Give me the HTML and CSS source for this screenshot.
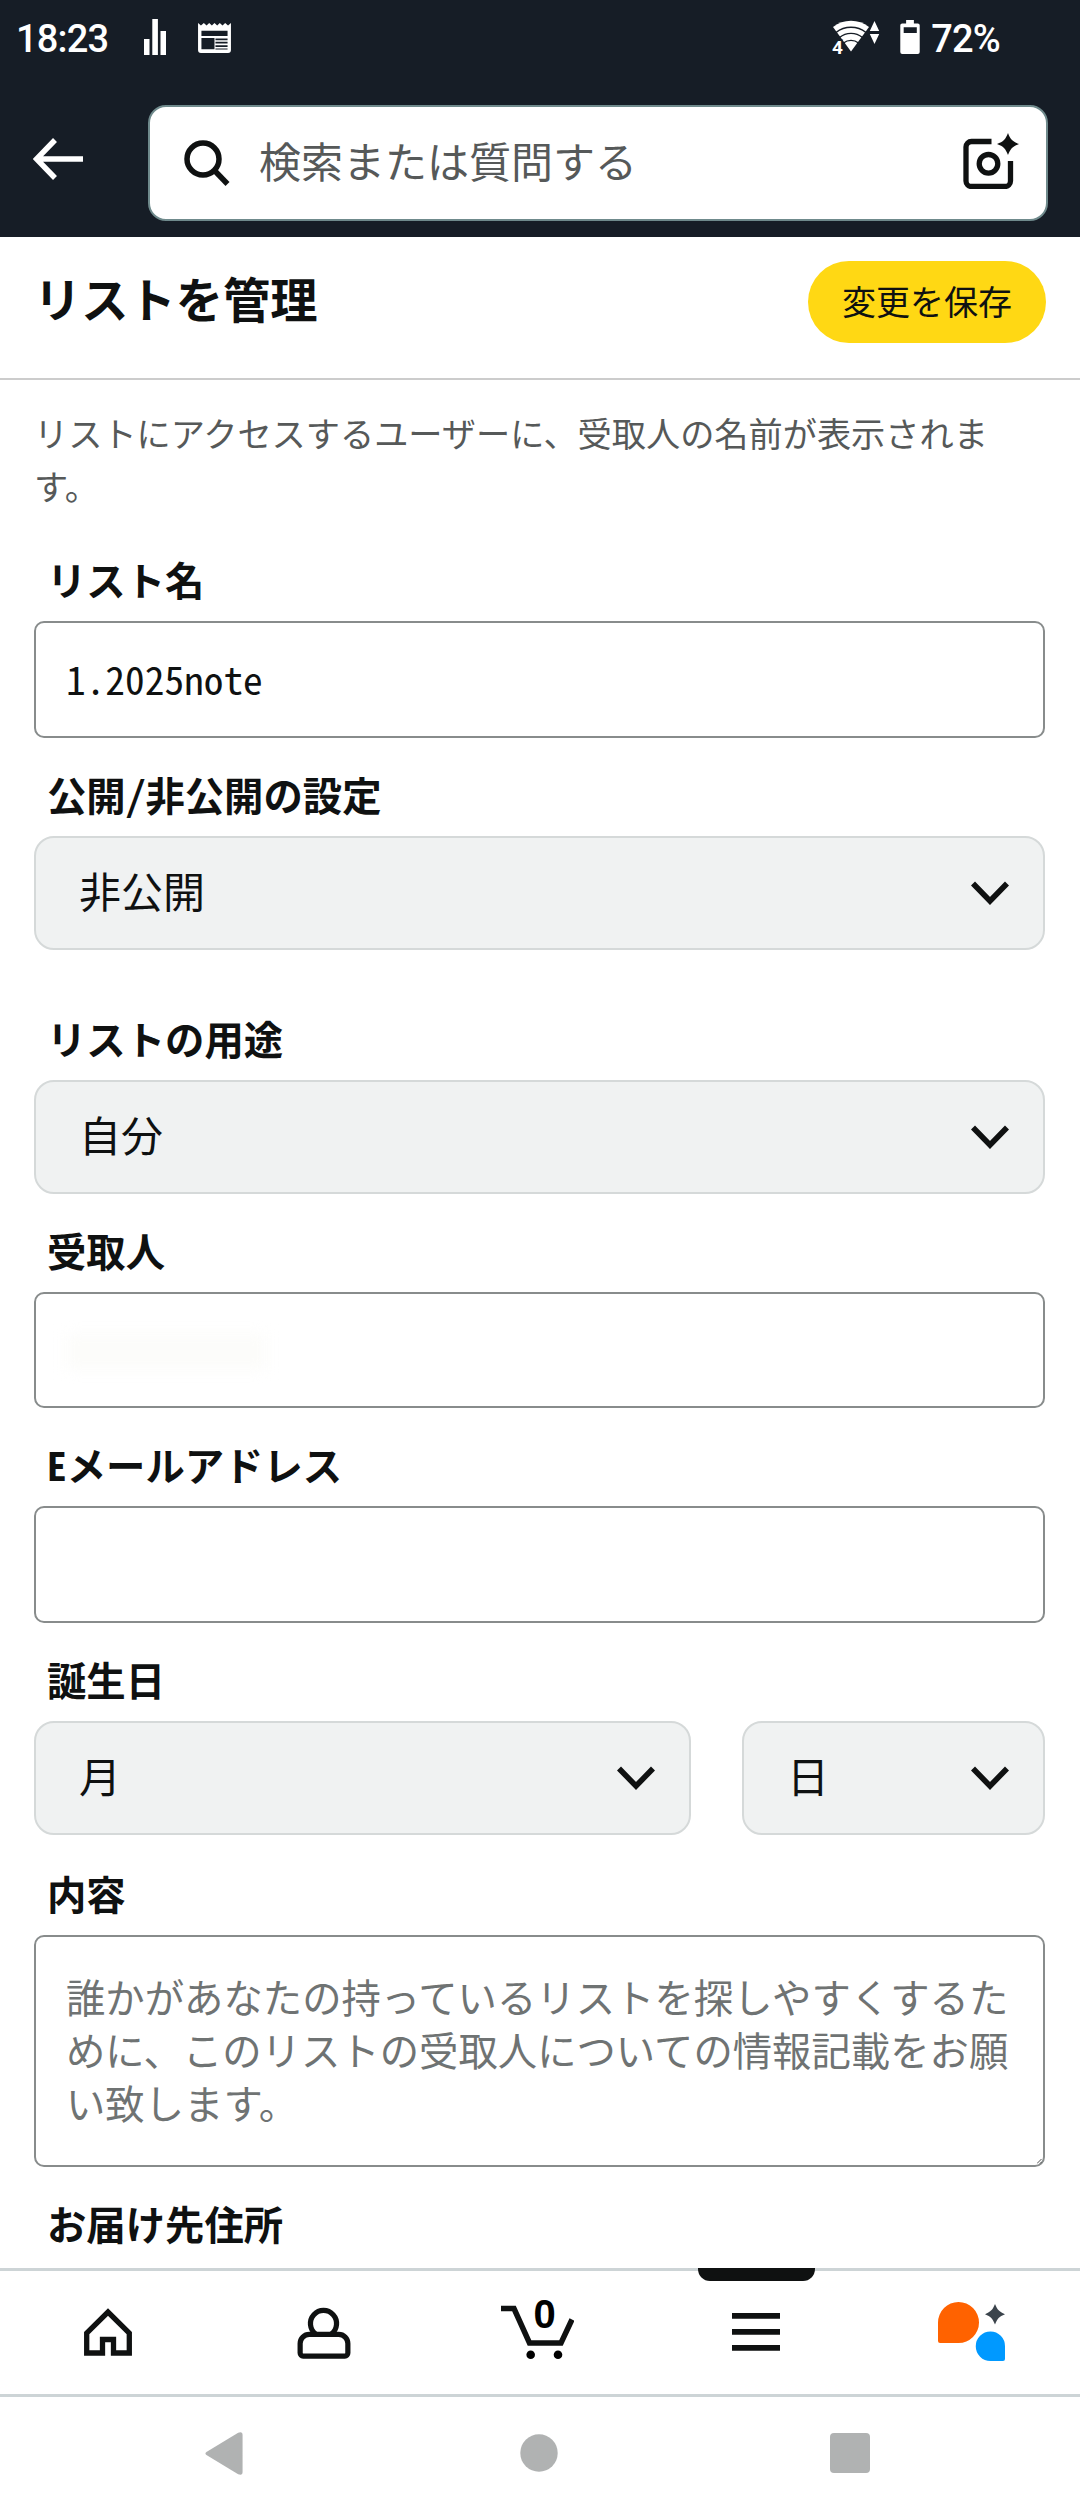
FILE: index.html
```html
<!DOCTYPE html>
<html lang="ja">
<head>
    <meta charset="UTF-8">
    <meta name="viewport" content="width=device-width, initial-scale=1.0">
    <title>リストを管理</title>
    <link rel="stylesheet" href="styles.css">
</head>
<body>
    <header class="header">
        <div class="status">
            <span class="status-time">18:23</span>
            <svg class="status-bars" width="22" height="36" viewBox="0 0 22 36" fill="#fff">
                <path d="M0 20h5.500v16H0zM8.300 0h5.600v36H8.300zM16.500 12H22v24h-5.500z"/>
            </svg>
            <svg class="status-news" width="33" height="30" viewBox="0 0 34 31">
                <path fill="#fff" fill-rule="evenodd" d="M0 0l3 2.500L6 0l2.800 2.500L11.500 0l2.800 2.500L17 0l2.800 2.500L22.500 0l2.800 2.500L28 0l3 2.500L34 0v28a3 3 0 0 1-3 3H3a3 3 0 0 1-3-3zM3.500 8v5.500h27V8zM3.500 15.500v11.500H17V15.500zM18 16v1.800h12.500V16zM18 19.500v1.800h12.500v-1.800zM18 23v1.800h12.500V23zM18 26.300v1.200h12.500v-1.200z"/>
            </svg>
            <svg class="status-wifi" width="50" height="44" viewBox="0 0 50 44">
                <path fill="#fff" d="M1 7a29 29 0 0 1 36 0L19 31.500z"/>
                <path fill="none" stroke="#161d26" stroke-width="1.400" d="M4 12.500a24 24 0 0 1 30 0M7.500 17.500a18 18 0 0 1 23 0M11.500 23a12 12 0 0 1 15 0"/>
                <path fill="#fff" d="M42.500 1l4.700 10h-9.400zM42.500 24l-4.700-10h9.400z"/>
                <text x="0" y="33.500" class="wifi-num">4</text>
            </svg>
            <svg class="status-battery" width="20" height="34" viewBox="0 0 20 35">
                <path fill="#fff" fill-rule="evenodd" d="M6 0h8v3.500h4a2 2 0 0 1 2 2V33a2 2 0 0 1-2 2H2a2 2 0 0 1-2-2V5.500a2 2 0 0 1 2-2h4zM3.500 7.500v6h13.500v-6z"/>
            </svg>
            <span class="status-percent">72%</span>
        </div>
        <div class="search-row">
            <svg class="back" width="50" height="42" viewBox="0 0 50 42" fill="none" stroke="#fff" stroke-width="5.500">
                <path d="M22 2L3.500 21L22 40M4 21h46"/>
            </svg>
            <div class="search">
                <svg width="46" height="46" viewBox="0 0 46 46" fill="none" stroke="#0f1111" stroke-width="5.500">
                    <circle cx="19" cy="19" r="16"/>
                    <path d="M30 30l13.500 14"/>
                </svg>
                <span class="search-text">検索または質問する</span>
                <svg class="camera" width="56" height="56" viewBox="0 0 56 56" fill="none" stroke="#0f1111" stroke-width="5.300">
                    <path d="M28.500 8.500H8.500a5.500 5.500 0 0 0-5.500 5.500v34a5.500 5.500 0 0 0 5.500 5.500h33.500a5.500 5.500 0 0 0 5.500-5.500V28"/>
                    <circle cx="25.500" cy="30.800" r="9.300"/>
                    <path fill="#0f1111" stroke="none" d="M45 0c2.500 6.500 4.500 8.500 11 11c-6.500 2.500-8.500 4.500-11 11c-2.500-6.500-4.500-8.500-11-11c6.500-2.500 8.500-4.500 11-11z"/>
                </svg>
            </div>
        </div>
    </header>

    <div class="title-bar">
        <h1>リストを管理</h1>
        <button class="save">変更を保存</button>
    </div>

    <main class="form">
        <p class="note">リストにアクセスするユーザーに、受取人の名前が表示されます。</p>

        <div class="label">リスト名</div>
        <div class="input">1.2025note</div>

        <div class="label">公開/非公開の設定</div>
        <div class="select select-gap">
            <span>非公開</span>
            <svg class="arrow" viewBox="0 0 38 24"><path d="M2 2.500l17 17.500l17-17.500"/></svg>
        </div>

        <div class="label">リストの用途</div>
        <div class="select">
            <span>自分</span>
            <svg class="arrow" viewBox="0 0 38 24"><path d="M2 2.500l17 17.500l17-17.500"/></svg>
        </div>

        <div class="label">受取人</div>
        <div class="input"><span class="smudge"></span></div>

        <div class="label">Eメールアドレス</div>
        <div class="input"></div>

        <div class="label">誕生日</div>
        <div class="birthday">
            <div class="select">
                <span>月</span>
                <svg class="arrow" viewBox="0 0 38 24"><path d="M2 2.500l17 17.500l17-17.500"/></svg>
            </div>
            <div class="select">
                <span>日</span>
                <svg class="arrow" viewBox="0 0 38 24"><path d="M2 2.500l17 17.500l17-17.500"/></svg>
            </div>
        </div>

        <div class="label">内容</div>
        <div class="textarea">誰かがあなたの持っているリストを探しやすくするために、このリストの受取人についての情報記載をお願い致します。
            <svg class="grip" width="5" height="5" viewBox="0 0 5 5" stroke="#555"><path d="M0 4.500L4.500 0M3 4.500L4.500 3"/></svg>
        </div>

        <div class="label">お届け先住所</div>
    </main>

    <nav class="tabs">
        <div class="tab">
            <svg width="48" height="48" viewBox="0 0 48 48" fill="none" stroke="#0f1111" stroke-width="5.300">
                <path d="M2.700 45V25L24 4l21.300 21v20H29.500V31.500h-11V45z"/>
            </svg>
        </div>
        <div class="tab">
            <svg width="54" height="54" viewBox="0 0 54 55" fill="none" stroke="#0f1111" stroke-width="5.300">
                <path d="M18.500 29.500a13.300 13.300 0 1 1 16 0"/>
                <path d="M12 30h30a9.300 9.300 0 0 1 9.300 9.300V49a3 3 0 0 1-3 3H5.700a3 3 0 0 1-3-3v-9.700A9.300 9.300 0 0 1 12 30z"/>
            </svg>
        </div>
        <div class="tab tab-cart">
            <svg width="73" height="78" viewBox="0 0 73 78">
                <path fill="none" stroke="#0f1111" stroke-width="5.500" d="M0 19.500h13L28.500 54h31.500L71 30.500"/>
                <circle cx="29.700" cy="65.700" r="4.300"/>
                <circle cx="57" cy="65.700" r="4.300"/>
                <text x="43.500" y="39" text-anchor="middle" class="cart-num">0</text>
            </svg>
        </div>
        <div class="tab tab-active">
            <svg width="48" height="38" viewBox="0 0 48 38" fill="#0f1111">
                <path d="M0 0h48v5.700H0zM0 16h48v5.700H0zM0 32h48v5.700H0z"/>
            </svg>
        </div>
        <div class="tab">
            <svg width="68" height="59" viewBox="0 0 68 59">
                <path fill="#ff6200" d="M20.500 0a20.500 20.500 0 1 1 0 41H2a2 2 0 0 1-2-2V20.500A20.500 20.500 0 0 1 20.500 0z"/>
                <path fill="#0099ff" d="M52.500 29.500A14.500 14.700 0 0 1 67 44.200V57a2 2 0 0 1-2 2H52.500a14.700 14.700 0 0 1 0-29.500z"/>
                <path fill="#3b444c" d="M57 2c2.500 6 4 7.500 10 10.200c-6 2.500-7.500 4-10 10.300c-2.500-6.300-4-7.800-10-10.300c6-2.700 7.500-4.200 10-10.200z"/>
            </svg>
        </div>
    </nav>

    <footer class="system">
        <svg width="38" height="43" viewBox="0 0 38 44" fill="#b0b2b2">
            <path d="M1 20.500L33.500 .700Q38-1 38 3v38q0 4-4.500 2.300L1 23.500q-2-1.500 0-3z"/>
        </svg>
        <svg class="system-home" width="38" height="38" viewBox="0 0 38 38" fill="#b0b2b2"><circle cx="19" cy="19" r="18.700"/></svg>
        <svg width="40" height="40" viewBox="0 0 40 40" fill="#b0b2b2"><rect width="40" height="40" rx="4"/></svg>
    </footer>
</body>
</html>
```

FILE: styles.css
```css
*{
    box-sizing: border-box;
}
body{
    margin: 0;
    height: 2520px;
    display: flex;
    flex-direction: column;
    overflow: hidden;
    background: #fff;
    color: #0f1111;
    font-family: "Noto Sans CJK JP", sans-serif;
    font-size: 39.375px;
}
svg{
    display: block;
    flex: none;
}
.header{
    flex: none;
    height: 237px;
    background: #161d26;
}
.status{
    display: flex;
    align-items: flex-start;
    height: 105px;
    padding: 19px 80px 0 16px;
    color: #fff;
    font-family: Roboto, sans-serif;
    font-size: 38px;
    font-weight: 500;
    line-height: 40px;
    letter-spacing: -.8px;
}
.status-time{
    width: 128px;
}
.status-news{
    margin: 4px 0 0 32px;
}
.status-wifi{
    margin: 1px 0 0 auto;
}
.wifi-num{
    fill: #fff;
    font-size: 19px;
    font-weight: 700;
    stroke: #161d26;
    stroke-width: 3px;
    paint-order: stroke;
}
.status-battery{
    margin: 1px 11px 0 18px;
}
.search-row{
    display: flex;
    padding: 0 32px 0 33px;
}
.back{
    margin: 33px 65px 0 0;
}
.search{
    display: flex;
    align-items: center;
    flex: 1;
    height: 116px;
    padding: 0 28px 0 34px;
    border: 2px solid #6f8a8c;
    border-radius: 18px;
    background: #fff;
}
.search-text{
    margin-left: 29px;
    padding-bottom: 6px;
    color: #565959;
    font-size: 42px;
    line-height: 60px;
}
.camera{
    margin: 0 -1px 4px auto;
}
.title-bar{
    display: flex;
    flex: none;
    align-items: flex-start;
    justify-content: space-between;
    height: 143px;
    padding: 24px 34px 0;
    border-bottom: 2px solid #ccc;
}
h1{
    margin: 4px 0 0;
    font-size: 47.25px;
    line-height: 66px;
}
.save{
    width: 238px;
    height: 82px;
    padding: 0 0 3px;
    border: 0;
    border-radius: 41px;
    background: #ffd814;
    color: #0f1111;
    font-family: inherit;
    font-size: 34px;
}
.form{
    flex: none;
    height: 1888px;
    padding: 26px 35px 0 34px;
    overflow: hidden;
}
.note{
    margin: 0 0 41px;
    color: #565959;
    font-size: 34.2px;
    line-height: 53px;
}
.label{
    height: 68px;
    padding: 0 13px;
    font-weight: 700;
    line-height: 52px;
    font-feature-settings: "hwid";
}
.input,
.textarea{
    height: 116.5px;
    margin-bottom: 30px;
    padding: 0 30px;
    border: 2px solid #888c8c;
    border-radius: 10px;
    line-height: 110px;
    font-feature-settings: "hwid";
}
.select{
    display: flex;
    align-items: center;
    justify-content: space-between;
    height: 114px;
    margin-bottom: 30px;
    padding: 0 34px 0 43px;
    border: 2px solid #d5d9d9;
    border-radius: 20px;
    background: #f0f2f2;
    font-size: 42px;
    line-height: 60px;
}
.select span{
    padding-bottom: 6px;
}
.select-gap{
    margin-bottom: 62px;
}
.arrow{
    width: 38px;
    height: 24px;
    fill: none;
    stroke: #0f1111;
    stroke-width: 5.6;
}
/* masked recipient name */
.smudge{
    display: block;
    width: 200px;
    height: 36px;
    margin-top: 40px;
    background: #fcfcfa;
    filter: blur(7px);
}
.birthday{
    display: grid;
    grid-template-columns: 657px 303px;
    gap: 51px;
    margin-bottom: 2.5px;
}
.textarea{
    position: relative;
    height: 231.5px;
    padding: 32px 30px 0;
    color: #6f7373;
    line-height: 53px;
}
.grip{
    position: absolute;
    right: 1px;
    bottom: 1px;
}
.tabs{
    display: grid;
    flex: none;
    grid-template-columns: repeat(5, 1fr);
    height: 129px;
    border-top: 3px solid #cdd4d6;
    border-bottom: 3px solid #cdd4d6;
}
.tab{
    position: relative;
    display: flex;
    align-items: center;
    justify-content: center;
    padding-bottom: 2px;
}
.tab-cart{
    padding: 0 5px 9px 0;
}
.tab-active::before{
    content: '';
    position: absolute;
    top: -3px;
    width: 117px;
    height: 13px;
    border-radius: 0 0 12px 12px;
    background: #0f1111;
}
.cart-num{
    font-family: "Liberation Sans", sans-serif;
    font-size: 40px;
    font-weight: 700;
}
.system{
    display: flex;
    align-items: center;
    justify-content: space-between;
    height: 123px;
    padding: 0 210px 11px 205px;
}
.system-home{
    margin-left: 5px;
}
```
